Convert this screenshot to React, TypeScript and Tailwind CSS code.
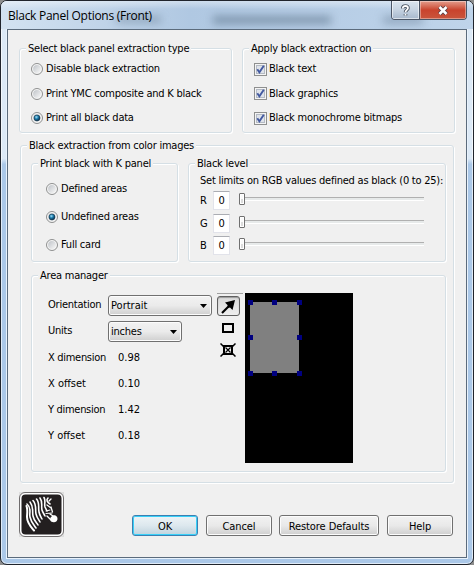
import type { ReactNode } from "react"
import clsx from "clsx"

function Group({ title, className, children }: { title: string; className?: string; children: ReactNode }) {
  return (
    <fieldset className={clsx("min-w-0 rounded-[3px] border border-[#d5dfe5] shadow-[1px_1px_0_#fff,inset_1px_1px_0_#fff]", className)}>
      <legend className="ml-[6px] h-[14px] bg-[#f0f0f0] px-[2px] leading-[16px]">{title}</legend>
      {children}
    </fieldset>
  )
}

function Radio({ label, checked }: { label: string; checked?: boolean }) {
  return (
    <label className="flex items-center gap-[3px]">
      <svg width="12" height="12" viewBox="0 0 12 12">
        <defs>
          <linearGradient id="radioFace" x1="0" y1="0" x2="1" y2="1">
            <stop offset="0" stopColor="#bfc3c8" />
            <stop offset="1" stopColor="#f8f8f8" />
          </linearGradient>
          <radialGradient id="radioDot" cx="0.4" cy="0.35" r="0.6">
            <stop offset="0" stopColor="#a5e0f6" />
            <stop offset="0.5" stopColor="#1d7fb0" />
            <stop offset="1" stopColor="#0b3350" />
          </radialGradient>
        </defs>
        <circle cx="6" cy="6" r="5.5" fill="#f6f6f6" stroke="#8e8f8f" />
        <circle cx="6" cy="6" r="3.9" fill="url(#radioFace)" />
        {checked && <circle cx="6" cy="6" r="3" fill="url(#radioDot)" stroke="#12384f" strokeWidth="0.6" />}
      </svg>
      <span>{label}</span>
    </label>
  )
}

function Check({ label }: { label: string }) {
  return (
    <label className="flex items-center gap-[2px]">
      <svg width="13" height="13" viewBox="0 0 13 13">
        <rect x="0.5" y="0.5" width="12" height="12" fill="#f4f4f4" stroke="#8e8f8f" />
        <rect x="2.5" y="2.5" width="8" height="8" fill="#dfe3ea" stroke="#b4bac4" />
        <path d="M3.3 6.2 L5.4 9.4 L9.8 2.8" fill="none" stroke="#4359a0" strokeWidth="1.9" />
      </svg>
      <span>{label}</span>
    </label>
  )
}

function Level({ name }: { name: string }) {
  return (
    <div className="flex items-center">
      <span className="w-[13px] pt-px">{name}</span>
      <span className="flex h-[19px] w-[17px] items-center justify-center border border-[#e2e3ea] border-t-[#abadb3] bg-white pt-px">0</span>
      <span className="mb-[3px] ml-[9px] flex h-[12px] w-[6px] rounded-[1px] border border-[#707070] bg-linear-to-b from-[#fafafa] from-50% to-[#dcdcdc] to-50% shadow-[inset_0_0_0_1px_#fff]" />
      <span className="mb-[3px] h-[4px] w-[179px] border-t border-b border-t-[#b0b0b0] border-b-white bg-[#e7eaea]" />
    </div>
  )
}

function Select({ value, className }: { value: string; className: string }) {
  return (
    <div
      className={clsx(
        "flex h-[21px] items-center justify-between rounded-[3px] border border-[#707070] bg-linear-to-b from-[#f2f2f2] via-[#ebebeb] via-50% to-[#cfcfcf] pr-[4px] pl-[2px] shadow-[inset_0_0_0_1px_#fcfcfc]",
        className
      )}
    >
      <span className="pt-px">{value}</span>
      <svg width="7" height="4" viewBox="0 0 7 4">
        <path d="M0 0 H7 L3.5 4 Z" fill="#000" />
      </svg>
    </div>
  )
}

function PushButton({ label, className, primary }: { label: string; className: string; primary?: boolean }) {
  return (
    <button
      className={clsx(
        "flex h-[21px] items-center justify-center rounded-[3px] border bg-linear-to-b pt-[2px] tracking-[-0.08px]",
        primary
          ? "border-[#3c7fb1] from-[#eef4f7] via-[#dde8ee] via-50% to-[#bfd3de] shadow-[inset_0_0_0_1px_#38d0f8]"
          : "border-[#707070] from-[#f2f2f2] via-[#e9e9e9] via-50% to-[#cfcfcf] shadow-[inset_0_0_0_1px_#fcfcfc]",
        className
      )}
    >
      {label}
    </button>
  )
}

function ZebraLogo() {
  return (
    <svg width="45" height="45" viewBox="0 0 45 45">
      <rect width="45" height="45" fill="#dedede" />
      <rect x="0.5" y="0.5" width="44" height="44" rx="5.5" fill="#fff" stroke="#6f6c6d" />
      <rect x="2.5" y="2.5" width="40" height="40" rx="4" fill="#231f20" />
      <g fill="none" stroke="#fff" strokeWidth="1.6" strokeLinecap="round">
        <path d="M7.5 14 C9 18 8 22 8 25 C8 31 12 35 15 38.5" strokeWidth="2" />
        <path d="M8 12 C13 16 10 21 11 25 C12 30 15 33 17 36" />
        <path d="M11 10 C15 15 13 20 14 24 C15 29 18 31 19 33" />
        <path d="M14 8.5 C18 13 16 18 17 22 C18 26 20 28 21 30" />
        <path d="M17.5 7 C21 11 19 16 20 20 C20.5 23 22 25 23 27" />
        <path d="M21 6 C24 10 22 14 23 18 C23.5 20 25 22 26 24" />
        <path d="M25 5.5 C27 9 25 12 26 15 L28 19" />
        <path d="M29 6 C27 8 28 10 31 12" />
        <path d="M32 7 L30 9 M28 13 L32 16 M32 15 L33.5 20" strokeWidth="1.3" />
        <path d="M27 19 L31 18 M27 21.5 L33 21" strokeWidth="1.1" />
        <path d="M28 24 L31 27 M31 22 L34 24" strokeWidth="1.4" />
      </g>
      <path d="M31 28 C31 25 34 22.5 36.5 23.5 C39.5 25 39 29.5 36 30 C34 30.5 32 30 31 28 Z" fill="#fff" />
    </svg>
  )
}

function TitleBar() {
  return (
    <div className="relative flex h-[28px] items-start justify-between overflow-hidden bg-linear-to-r from-[#d3e2f1] via-[#b0c8e2] via-40% to-[#bfd4ea] pl-[7px]">
      <div className="absolute inset-x-0 top-0 h-[8px] bg-linear-to-b from-white/40 to-transparent" />
      <div className="absolute top-[15px] left-[115px] h-[7px] w-[45px] bg-[#52697f]/40 blur-[4px]" />
      <div className="absolute top-[15px] left-[212px] h-[8px] w-[118px] bg-[#52697f]/55 blur-[4px]" />
      <div className="absolute top-[15px] left-[382px] h-[8px] w-[40px] bg-[#52697f]/40 blur-[4px]" />
      <h1 className="relative pt-[7px] font-['Open_Sans',sans-serif] text-[12px] leading-[15px] tracking-[-0.27px]">Black Panel Options (Front)</h1>
      <div className="relative mr-[6px] flex h-[19px] w-[76px] overflow-hidden rounded-b-[4px] border border-t-0 border-[#4b5666]">
        <div className="flex w-[28px] items-center justify-center border-r border-[#4b5666] bg-linear-to-b from-[#dbe5ef] via-[#c8d5e3] via-45% to-[#a7b8cc] shadow-[inset_0_0_0_1px_#ffffff90]">
          <svg width="11" height="13" viewBox="0 0 11 13" fill="none">
            <path d="M2.8 4.6 V4 C2.8 1.3 8 1.3 8 4 C8 6 5.5 5.8 5.5 8.3 M5.5 10 V11.5" stroke="#4c5664" strokeWidth="3.6" />
            <path d="M2.8 4.6 V4 C2.8 1.3 8 1.3 8 4 C8 6 5.5 5.8 5.5 8.3 M5.5 10 V11.5" stroke="#fff" strokeWidth="1.8" />
          </svg>
        </div>
        <div className="flex flex-1 items-center justify-center bg-linear-to-b from-[#e39c8c] via-[#c9432d] via-50% to-[#c9553c] shadow-[inset_0_0_0_1px_#ffffff60]">
          <svg width="12" height="11" viewBox="0 0 12 11" fill="none">
            <path d="M2.5 2 L9.5 9 M9.5 2 L2.5 9" stroke="#5c3f44" strokeWidth="4.4" />
            <path d="M2.5 2 L9.5 9 M9.5 2 L2.5 9" stroke="#fff" strokeWidth="2.5" />
          </svg>
        </div>
      </div>
    </div>
  )
}

const handles = [
  "-left-[2px] -top-[2px]",
  "left-[22px] -top-[2px]",
  "-right-[3px] -top-[2px]",
  "-left-[2px] top-[33px]",
  "-right-[3px] top-[33px]",
  "-left-[2px] -bottom-[3px]",
  "left-[22px] -bottom-[3px]",
  "-right-[3px] -bottom-[3px]",
]

const dimensions = [
  { name: "X dimension", value: "0.98", tracking: "tracking-[-0.3px]" },
  { name: "X offset", value: "0.10", tracking: "tracking-normal" },
  { name: "Y dimension", value: "1.42", tracking: "tracking-[-0.3px]" },
  { name: "Y offset", value: "0.18", tracking: "tracking-normal" },
]

export default function App() {
  return (
    <div className="h-[565px] w-[474px] bg-[#8d8d8d]">
      <div className="flex h-full flex-col overflow-hidden rounded-[7px] border border-[#20242c] bg-linear-to-b from-[#dce9f6] from-28% to-[#abc8e8] to-29% font-['DejaVu_Sans_Condensed','DejaVu_Sans',sans-serif] text-[11px] leading-[14px] tracking-[-0.23px] whitespace-nowrap text-black shadow-[inset_0_0_0_1px_#ffffffa0]">
        <TitleBar />
        <main className="mx-[6px] h-[529px] border border-[#5b6b7c] bg-[#f0f0f0] shadow-[0_0_0_1px_#e8f2fc]">
          <div className="flex gap-[10px] pt-[11px] pl-[11px]">
            <Group title="Select black panel extraction type" className="h-[92px] w-[213px]">
              <div className="grid grid-rows-[24px_25px_24px] pt-[2px] pl-[11px]">
                <Radio label="Disable black extraction" />
                <Radio label="Print YMC composite and K black" />
                <Radio label="Print all black data" checked />
              </div>
            </Group>
            <Group title="Apply black extraction on" className="h-[92px] w-[213px]">
              <div className="grid grid-rows-[24px_25px_24px] pt-[2px] pl-[11px]">
                <Check label="Black text" />
                <Check label="Black graphics" />
                <Check label="Black monochrome bitmaps" />
              </div>
            </Group>
          </div>

          <Group title="Black extraction from color images" className="mt-[5px] ml-[12px] h-[345px] w-[434px]">
            <div className="mt-[4px] ml-[10px] flex gap-[10px]">
              <Group title="Print black with K panel" className="h-[106px] w-[147px]">
                <div className="grid grid-rows-[28px_28px_27px] pt-[5px] pl-[14px]">
                  <Radio label="Defined areas" />
                  <Radio label="Undefined areas" checked />
                  <Radio label="Full card" />
                </div>
              </Group>
              <Group title="Black level" className="h-[106px] w-[258px]">
                <div className="pt-[4px] pl-[11px]">
                  <p>Set limits on RGB values defined as black (0 to 25):</p>
                  <div className="mt-[3px] flex flex-col gap-[3.7px]">
                    <Level name="R" />
                    <Level name="G" />
                    <Level name="B" />
                  </div>
                </div>
              </Group>
            </div>

            <Group title="Area manager" className="mt-[6px] ml-[10px] h-[204px] w-[415px]">
              <div className="flex pt-[11px] pl-[16px]">
                <div className="w-[169px]">
                  <div className="flex h-[26px] items-start">
                    <span className="w-[60px] pt-[5px]">Orientation</span>
                    <Select value="Portrait" className="mt-[2px] w-[104px] tracking-normal" />
                  </div>
                  <div className="flex h-[26px] items-start">
                    <span className="w-[60px] pt-[5px]">Units</span>
                    <Select value="inches" className="mt-[2px] w-[74px]" />
                  </div>
                  {dimensions.map(({ name, value, tracking }) => (
                    <div key={name} className="flex h-[26px] items-start pt-[6px]">
                      <span className={clsx("w-[70px]", tracking)}>{name}</span>
                      <span className="tracking-normal">{value}</span>
                    </div>
                  ))}
                </div>
                <div className="flex w-[28px] flex-col">
                  <div className="h-px w-[26px] bg-[#a0a0a0]" />
                  <div className="mt-[2px] flex h-[20px] w-[23px] items-center justify-center rounded-[3px] border border-[#606060] bg-linear-to-b from-[#d9d9d9] to-[#eeeeee] shadow-[inset_0_1px_1px_#9a9a9a]">
                    <svg width="15" height="15" viewBox="0 0 15 15">
                      <path d="M1 14 L8 7" stroke="#000" strokeWidth="2.2" />
                      <path d="M14 1 L11.5 11 L9 8.5 L7 9 L6.5 6 L4 3.5 Z" />
                    </svg>
                  </div>
                  <svg className="mt-[7px] ml-[5px]" width="12" height="10" viewBox="0 0 12 10">
                    <rect x="1" y="1" width="10" height="8" fill="none" stroke="#000" strokeWidth="2" />
                  </svg>
                  <svg className="mt-[10px] ml-[3px]" width="16" height="14" viewBox="0 0 16 14" fill="none" stroke="#000">
                    <rect x="4" y="3" width="8" height="8" strokeWidth="2" />
                    <path d="M0.5 0.5 L3.5 3.5 M15.5 0.5 L12.5 3.5 M0.5 13.5 L3.5 10.5 M15.5 13.5 L12.5 10.5" strokeWidth="1.5" />
                    <path d="M5.5 4.5 L10.5 9.5 M10.5 4.5 L5.5 9.5" strokeWidth="1.2" />
                  </svg>
                </div>
                <div className="h-[170px] w-[108px] bg-black pt-[9px] pl-[5px]">
                  <div className="relative h-[71px] w-[49px] bg-[#808080]">
                    {handles.map((pos) => (
                      <span key={pos} className={clsx("absolute size-[5px] bg-[#000080]", pos)} />
                    ))}
                  </div>
                </div>
              </div>
            </Group>
          </Group>

          <footer className="mt-[9px] flex items-start pl-[11px]">
            <ZebraLogo />
            <div className="mt-[23px] ml-[68px] flex">
              <PushButton label="OK" className="w-[66px]" primary />
              <PushButton label="Cancel" className="ml-[8px] w-[66px]" />
              <PushButton label="Restore Defaults" className="ml-[7px] w-[100px]" />
              <PushButton label="Help" className="ml-[8px] w-[66px]" />
            </div>
          </footer>
        </main>
      </div>
    </div>
  )
}
